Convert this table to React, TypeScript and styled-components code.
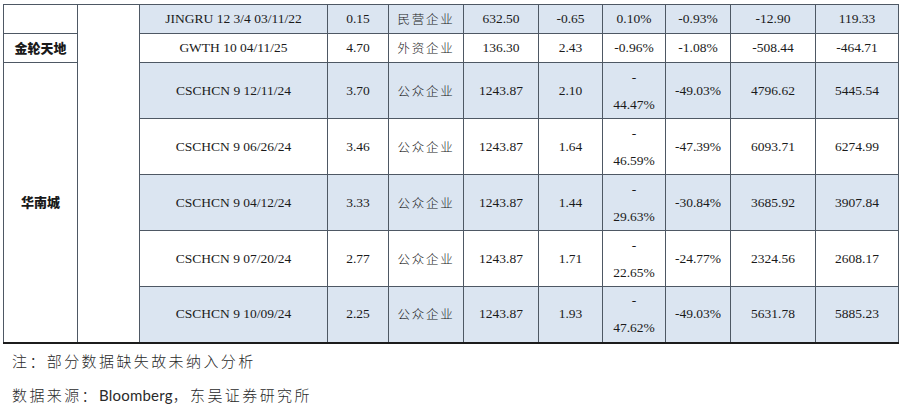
import React from 'react';
import styled, { createGlobalStyle } from 'styled-components';

const GlobalStyle = createGlobalStyle`
  body {
    margin: 0;
    background: #ffffff;
  }
`;

const BAND_COLOUR = '#dbe5f1',
  LINE_COLOUR = '#4e5864';

type Bond = {
  name: string;
  coupon: string;
  kind: string;
  amount: string;
  a: string;
  b: string;
  c: string;
  d: string;
  e: string;
  split?: boolean;
};

const bonds: Bond[] = [
  { name: 'JINGRU 12 3/4 03/11/22', coupon: '0.15', kind: '民营企业', amount: '632.50', a: '-0.65', b: '0.10%', c: '-0.93%', d: '-12.90', e: '119.33' },
  { name: 'GWTH 10 04/11/25', coupon: '4.70', kind: '外资企业', amount: '136.30', a: '2.43', b: '-0.96%', c: '-1.08%', d: '-508.44', e: '-464.71' },
  { name: 'CSCHCN 9 12/11/24', coupon: '3.70', kind: '公众企业', amount: '1243.87', a: '2.10', b: '44.47%', c: '-49.03%', d: '4796.62', e: '5445.54', split: true },
  { name: 'CSCHCN 9 06/26/24', coupon: '3.46', kind: '公众企业', amount: '1243.87', a: '1.64', b: '46.59%', c: '-47.39%', d: '6093.71', e: '6274.99', split: true },
  { name: 'CSCHCN 9 04/12/24', coupon: '3.33', kind: '公众企业', amount: '1243.87', a: '1.44', b: '29.63%', c: '-30.84%', d: '3685.92', e: '3907.84', split: true },
  { name: 'CSCHCN 9 07/20/24', coupon: '2.77', kind: '公众企业', amount: '1243.87', a: '1.71', b: '22.65%', c: '-24.77%', d: '2324.56', e: '2608.17', split: true },
  { name: 'CSCHCN 9 10/09/24', coupon: '2.25', kind: '公众企业', amount: '1243.87', a: '1.93', b: '47.62%', c: '-49.03%', d: '5631.78', e: '5885.23', split: true },
];

const colWidths = [74, 62, 188, 61, 75, 75, 64, 63, 65, 85, 83];

const Page = styled.div`
  padding: 4px 0 0 3px;
  width: 895px;
`;

const Table = styled.table`
  border-collapse: collapse;
  table-layout: fixed;
  width: 895px;
  border-bottom: 2px solid #1c1c1c;
`;

const Row = styled.tr<{ $tall: boolean }>`
  height: ${(p) => (p.$tall ? '56px' : '29px')};
`;

const Cell = styled.td<{ $band?: boolean }>`
  border: 1px solid ${LINE_COLOUR};
  background: ${(p) => (p.$band ? BAND_COLOUR : '#ffffff')};
  padding: 0 2px;
  text-align: center;
  vertical-align: middle;
  font-family: "Liberation Serif", "Times New Roman", serif;
  font-size: 13.5px;
  line-height: 16px;
  color: #1a1a1a;
  white-space: nowrap;
`;

const CnCell = styled(Cell)`
  font-family: "Noto Sans CJK SC", sans-serif;
  font-weight: 300;
  font-size: 12.5px;
  letter-spacing: 1.8px;
`;

const CompanyCell = styled(Cell)`
  font-family: "Noto Sans CJK SC", sans-serif;
  font-weight: 900;
  font-size: 13px;
  background: #ffffff;
`;

const SplitText = styled.div`
  line-height: 27px;
`;

const Notes = styled.div`
  padding: 0 0 0 9px;
  font-family: "Noto Sans CJK SC", sans-serif;
  font-size: 15px;
  font-weight: 300;
  color: #2a2a2a;
  letter-spacing: 2.4px;
`;

const NoteLine = styled.p`
  margin: 0;
  height: 34px;
  line-height: 34px;
`;

const Latin = styled.span`
  font-family: Lato, "Noto Sans", sans-serif;
  font-weight: 400;
  letter-spacing: 0.2px;
`;

const App: React.FunctionComponent = () => {
  return (
    <Page>
      <GlobalStyle />
      <Table>
        <colgroup>
          {colWidths.map((w, i) => (
            <col key={i} style={{ width: w }} />
          ))}
        </colgroup>
        <tbody>
          {bonds.map((bond, i) => {
            const band = i % 2 === 0;
            return (
              <Row key={bond.name} $tall={i > 1}>
                {i === 0 && <CompanyCell />}
                {i === 1 && <CompanyCell>金轮天地</CompanyCell>}
                {i === 2 && <CompanyCell rowSpan={5}>华南城</CompanyCell>}
                {i === 0 && <Cell rowSpan={7} />}
                <Cell $band={band}>{bond.name}</Cell>
                <Cell $band={band}>{bond.coupon}</Cell>
                <CnCell $band={band}>{bond.kind}</CnCell>
                <Cell $band={band}>{bond.amount}</Cell>
                <Cell $band={band}>{bond.a}</Cell>
                <Cell $band={band}>
                  {bond.split ? (
                    <>
                      <SplitText>-</SplitText>
                      <SplitText>{bond.b}</SplitText>
                    </>
                  ) : (
                    bond.b
                  )}
                </Cell>
                <Cell $band={band}>{bond.c}</Cell>
                <Cell $band={band}>{bond.d}</Cell>
                <Cell $band={band}>{bond.e}</Cell>
              </Row>
            );
          })}
        </tbody>
      </Table>
      <Notes>
        <NoteLine>注：部分数据缺失故未纳入分析</NoteLine>
        <NoteLine>
          数据来源：<Latin>Bloomberg</Latin>，东吴证券研究所
        </NoteLine>
      </Notes>
    </Page>
  );
};

export default App;
